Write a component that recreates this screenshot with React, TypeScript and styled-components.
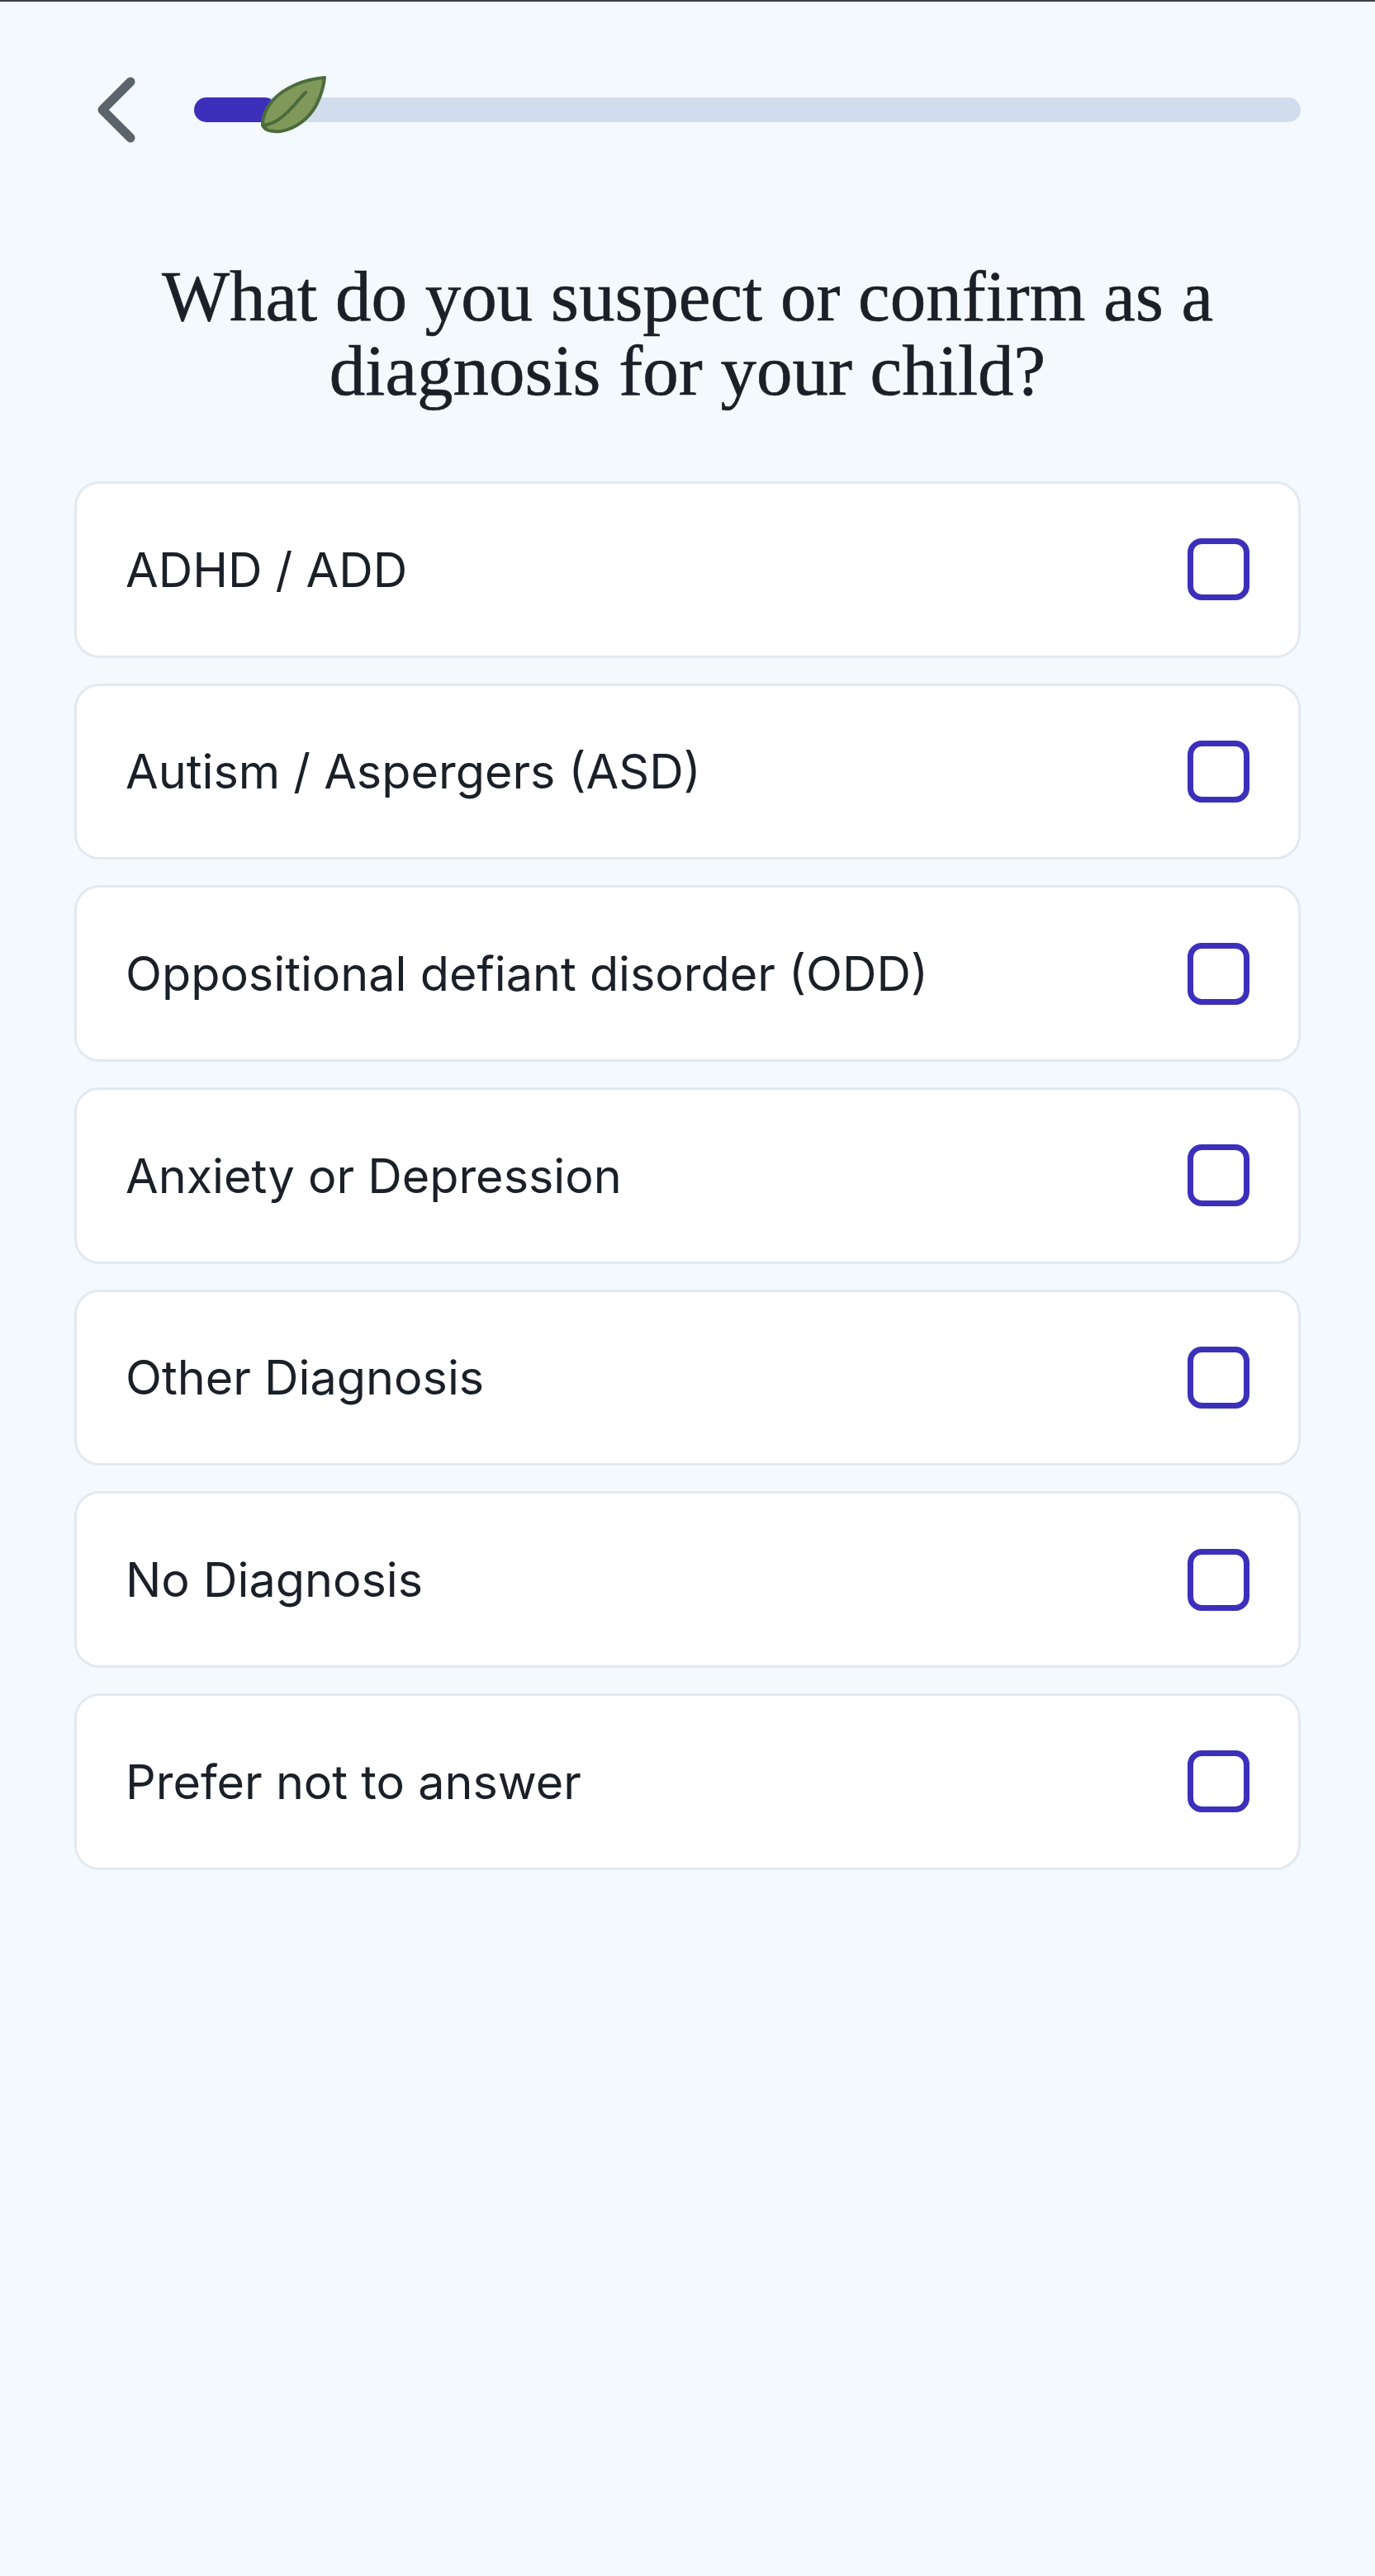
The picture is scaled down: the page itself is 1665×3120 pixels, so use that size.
import styled, { createGlobalStyle } from "styled-components";

const GlobalStyle = createGlobalStyle`
  html, body {
    margin: 0;
    padding: 0;
    background: #f4f9fe;
  }
  * {
    box-sizing: border-box;
  }
`;

const Page = styled.div`
  width: 100%;
  min-height: 3120px;
  background: #f4f9fe;
  border-top: 2px solid #3d4249;
  padding: 0 90px;
`;

const TopBar = styled.div`
  display: flex;
  align-items: center;
  height: 80px;
  margin-top: 91px;
  padding-left: 28px;
  gap: 71px;
`;

const BackButton = styled.button`
  display: flex;
  width: 46px;
  height: 80px;
  padding: 0;
  border: none;
  background: none;
`;

const Track = styled.div`
  position: relative;
  flex: 1;
  height: 30px;
  border-radius: 15px;
  background: #d1dcec;
`;

const Fill = styled.div`
  height: 100%;
  border-radius: 15px;
  background: #3c30bb;
`;

const Leaf = styled.svg`
  position: absolute;
  top: -26px;
  left: 81px;
`;

const Title = styled.h1`
  margin: 141px 0 0;
  font-family: "Liberation Serif", serif;
  font-size: 87px;
  font-weight: 400;
  line-height: 90px;
  text-align: center;
  color: #1b2028;
  -webkit-text-stroke: 0.6px #1b2028;
`;

const Options = styled.div`
  display: flex;
  flex-direction: column;
  gap: 31px;
  margin-top: 89px;
`;

const Option = styled.label`
  display: flex;
  align-items: center;
  justify-content: space-between;
  height: 213.67px;
  padding: 0 59px;
  border: 3px solid #e3e9f1;
  border-radius: 30px;
  background: #ffffff;
`;

const OptionText = styled.span`
  font-family: Inter, sans-serif;
  font-size: 57.5px;
  font-weight: 400;
  color: #1b2028;
`;

const Checkbox = styled.span`
  width: 75px;
  height: 75px;
  border: 7.5px solid #3c30bb;
  border-radius: 17px;
`;

const OPTIONS = [
  "ADHD / ADD",
  "Autism / Aspergers (ASD)",
  "Oppositional defiant disorder (ODD)",
  "Anxiety or Depression",
  "Other Diagnosis",
  "No Diagnosis",
  "Prefer not to answer",
];

function App() {
  return (
    <Page>
      <GlobalStyle />
      <TopBar>
        <BackButton>
          <svg width="46" height="80" viewBox="0 0 46 80" fill="none">
            <path
              d="M40 6 L6 40 L40 74"
              stroke="#5b636c"
              strokeWidth="11"
              strokeLinecap="round"
              strokeLinejoin="round"
            />
          </svg>
        </BackButton>
        <Track>
          <Fill style={{ width: `${(100 / 1340) * 100}%` }} />
          <Leaf width="80" height="70" viewBox="0 0 80 70">
            <path
              d="M77 2 C52 4 28 14 14 30 C6 39 2 50 2 59 C4 66 12 68 24 67 C42 64 58 52 67 35 C72 25 76 13 77 2 Z"
              fill="#80985a"
              stroke="#4c6b3d"
              strokeWidth="4"
              strokeLinejoin="round"
            />
            <path
              d="M54 20 C44 30 36 42 25 50 C18 56 10 59 2 60"
              fill="none"
              stroke="#4c6b3d"
              strokeWidth="4"
              strokeLinecap="round"
            />
          </Leaf>
        </Track>
      </TopBar>
      <Title>
        What do you suspect or confirm as a
        <br />
        diagnosis for your child?
      </Title>
      <Options>
        {OPTIONS.map((option) => (
          <Option key={option}>
            <OptionText>{option}</OptionText>
            <Checkbox />
          </Option>
        ))}
      </Options>
    </Page>
  );
}

export default App;
